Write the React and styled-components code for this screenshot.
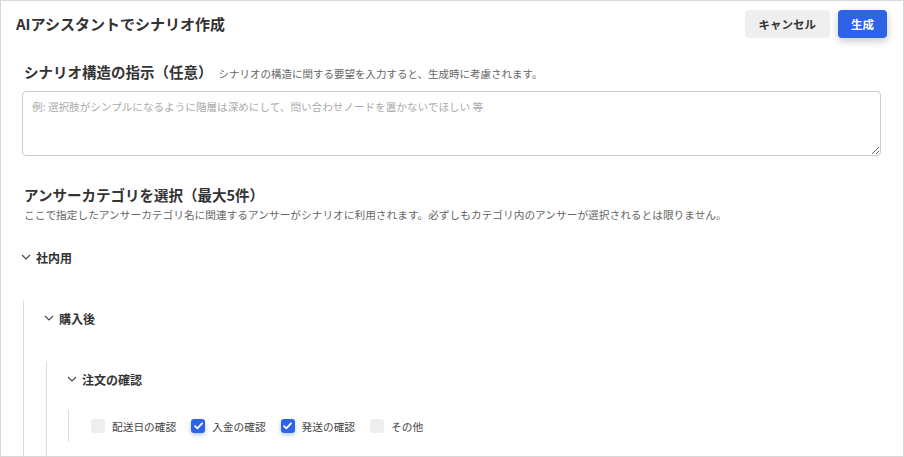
import React from "react";
import styled, { createGlobalStyle } from "styled-components";

const GlobalStyle = createGlobalStyle`
  html, body {
    margin: 0;
    padding: 0;
    background: #fff;
  }
  body {
    font-family: "Noto Sans CJK JP", "Noto Sans", sans-serif;
    color: #333;
  }
`;

const tree = {
  label: "社内用",
  children: [
    {
      label: "購入後",
      children: [
        {
          label: "注文の確認",
          options: [
            { label: "配送日の確認", checked: false },
            { label: "入金の確認", checked: true },
            { label: "発送の確認", checked: true },
            { label: "その他", checked: false },
          ],
        },
      ],
    },
  ],
};

function Chevron() {
  return (
    <ChevronIcon width="10" height="6" viewBox="0 0 10 6">
      <path d="M1 1 L5 5 L9 1" fill="none" stroke="#444" strokeWidth="1.1" />
    </ChevronIcon>
  );
}

function CheckItem({ label, checked }) {
  return (
    <Option>
      <Box checked={checked}>
        {checked && (
          <svg width="9" height="8" viewBox="0 0 9 8">
            <path
              d="M1 4.2 L3.4 6.4 L8 1.4"
              fill="none"
              stroke="#fff"
              strokeWidth="1.8"
              strokeLinecap="round"
              strokeLinejoin="round"
            />
          </svg>
        )}
      </Box>
      <OptionLabel>{label}</OptionLabel>
    </Option>
  );
}

function TreeNode({ node }) {
  return (
    <div>
      <NodeHeader>
        <Chevron />
        <NodeLabel>{node.label}</NodeLabel>
      </NodeHeader>
      {node.children && (
        <Children>
          {node.children.map((c) => (
            <TreeNode key={c.label} node={c} />
          ))}
        </Children>
      )}
      {node.options && (
        <Leaf>
          {node.options.map((o) => (
            <CheckItem key={o.label} {...o} />
          ))}
        </Leaf>
      )}
    </div>
  );
}

export default function App() {
  return (
    <>
      <GlobalStyle />
      <Frame>
        <TopBar>
          <Title>AIアシスタントでシナリオ作成</Title>
          <Actions>
            <Button>キャンセル</Button>
            <Button primary>生成</Button>
          </Actions>
        </TopBar>
        <Body>
          <HeadingRow>
            <Heading>シナリオ構造の指示（任意）</Heading>
            <Hint>シナリオの構造に関する要望を入力すると、生成時に考慮されます。</Hint>
          </HeadingRow>
          <TextArea placeholder="例: 選択肢がシンプルになるように階層は深めにして、問い合わせノードを置かないでほしい 等" />
          <Heading second>アンサーカテゴリを選択（最大5件）</Heading>
          <Desc>
            ここで指定したアンサーカテゴリ名に関連するアンサーがシナリオに利用されます。必ずしもカテゴリ内のアンサーが選択されるとは限りません。
          </Desc>
          <Tree>
            <TreeNode node={tree} />
          </Tree>
        </Body>
      </Frame>
    </>
  );
}

const Frame = styled.div`
  width: 904px;
  height: 457px;
  box-sizing: border-box;
  border: 1px solid #d9d9d9;
  overflow: hidden;
  background: #fff;
`;

const TopBar = styled.div`
  display: flex;
  justify-content: space-between;
  align-items: center;
  padding: 9px 16px 0 15px;
`;

const Title = styled.h1`
  margin: 0;
  font-size: 15px;
  font-weight: 700;
  color: #333;
  line-height: 28px;
`;

const Actions = styled.div`
  display: flex;
  gap: 8px;
`;

const Button = styled.button`
  height: 28px;
  padding: 0 ${(p) => (p.primary ? "13px" : "14px")};
  border: none;
  border-radius: 4px;
  font-family: inherit;
  font-size: 11.5px;
  font-weight: 700;
  color: ${(p) => (p.primary ? "#fff" : "#333")};
  background: ${(p) => (p.primary ? "#2d63e6" : "#efefef")};
  box-shadow: ${(p) => (p.primary ? "0 3px 8px rgba(0,0,0,0.22)" : "none")};
`;

const Body = styled.div`
  padding: 0 22px 0 21px;
`;

const HeadingRow = styled.div`
  display: flex;
  align-items: baseline;
  gap: 6px;
  margin-top: 23px;
`;

const Heading = styled.h2`
  margin: ${(p) => (p.second ? "28px 0 0" : "0")};
  padding-left: 2px;
  font-size: 14.5px;
  font-weight: 700;
  line-height: 22px;
  color: #333;
`;

const Hint = styled.span`
  font-size: 10.5px;
  color: #666;
`;

const TextArea = styled.textarea`
  display: block;
  box-sizing: border-box;
  width: 100%;
  height: 65px;
  margin-top: 8px;
  padding: 7px 9px;
  border: 1px solid #ccc;
  border-radius: 4px;
  font-family: inherit;
  font-size: 10.6px;
  line-height: 16px;
  color: #333;
  &::placeholder {
    color: #aaa;
  }
`;

const Desc = styled.p`
  margin: 1px 0 0;
  padding-left: 2px;
  font-size: 10.7px;
  line-height: 16px;
  color: #666;
`;

const Tree = styled.div`
  margin-top: 22px;
`;

const NodeHeader = styled.div`
  display: flex;
  align-items: center;
  height: 24px;
  gap: 5px;
  margin-left: -1px;
`;

const ChevronIcon = styled.svg`
  flex: none;
`;

const NodeLabel = styled.span`
  font-size: 12px;
  font-weight: 700;
  color: #333;
`;

const Children = styled.div`
  margin: 31px 0 0 1px;
  padding: 6px 0 30px 21px;
  border-left: 1px solid #ddd;
`;

const Leaf = styled.div`
  display: flex;
  align-items: center;
  height: 32px;
  margin: 19px 0 0 0;
  padding-left: 22px;
  border-left: 1px solid #ddd;
`;

const Option = styled.label`
  display: flex;
  align-items: center;
  gap: 7px;
  margin-right: 15px;
`;

const Box = styled.span`
  display: flex;
  align-items: center;
  justify-content: center;
  width: 14px;
  height: 14px;
  border-radius: 3px;
  background: ${(p) => (p.checked ? "#2d63e6" : "#eeeeee")};
  box-shadow: ${(p) => (p.checked ? "0 2px 4px rgba(45,99,230,0.35)" : "none")};
`;

const OptionLabel = styled.span`
  font-size: 10.7px;
  color: #444;
`;
